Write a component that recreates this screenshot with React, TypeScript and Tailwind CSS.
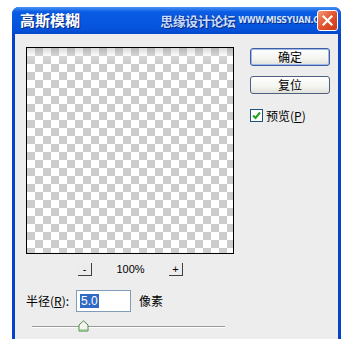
import React from "react";

const cjk = { fontFamily: '"Noto Sans CJK SC", "Noto Sans", sans-serif' };

function XpButton({ label, primary }: { label: string; primary?: boolean }) {
  return (
    <button
      type="button"
      className={`flex h-[18px] w-[80px] items-center justify-center rounded-[3px] border bg-[linear-gradient(#ffffff,#f4f4f0_60%,#e2e2dc)] text-[12px] leading-none text-black ${
        primary ? "border-[#3f5e9e] shadow-[inset_0_0_0_1px_#9db8ec]" : "border-[#4f5f7f]"
      }`}
      style={cjk}
    >
      {label}
    </button>
  );
}

function ZoomButton({ sign }: { sign: string }) {
  return (
    <button
      type="button"
      className="flex h-[13px] w-[14px] items-center justify-center border-r border-b border-[#404040] bg-[#ececec] text-[11px] leading-none text-black"
      style={{ fontFamily: '"Liberation Sans", sans-serif' }}
    >
      {sign}
    </button>
  );
}

export default function App() {
  return (
    <div className="h-[339px] w-[342px] overflow-hidden bg-white pl-[12px] pt-[7px]">
      <div className="flex h-[332px] w-[329px] flex-col overflow-hidden rounded-t-[7px] bg-[#0842c8]">
        {/* title bar */}
        <div className="flex h-[27px] shrink-0 items-center bg-[linear-gradient(#4a93f7,#0a5ce4_18%,#0553dc_80%,#0548cc)] pl-[8px] pr-[3px]">
          <span
            className="text-[15px] font-bold text-white [text-shadow:1px_1px_0_#0a2a80]"
            style={cjk}
          >
            高斯模糊
          </span>
          <div className="ml-auto flex items-center gap-[3px]">
            <span
              className="text-[13px] font-bold tracking-[-0.5px] text-[#c4dcff] [text-shadow:0_0_1px_#0a2a80,1px_1px_0_#0a2a80]"
              style={cjk}
            >
              思缘设计论坛
            </span>
            <span
              className="text-[8px] font-bold tracking-[-0.3px] text-[#d0e2ff] [text-shadow:1px_1px_0_#0a2a80]"
              style={{ fontFamily: '"DejaVu Sans", sans-serif' }}
            >
              WWW.MISSYUAN.COM
            </span>
          </div>
          <div className="relative z-10 -ml-[16px] flex h-[21px] w-[21px] shrink-0 items-center justify-center rounded-[3px] border border-white bg-[linear-gradient(135deg,#f29a7a,#e2542e_50%,#c8381a)]">
            <svg width="11" height="11" viewBox="0 0 11 11">
              <path d="M1.5 1.5 L9.5 9.5 M9.5 1.5 L1.5 9.5" stroke="white" strokeWidth="2.2" strokeLinecap="square" />
            </svg>
          </div>
        </div>

        {/* body */}
        <div className="mx-[3px] flex flex-1 gap-[16px] bg-[#ededed] pl-[11px] pt-[13px]">
          <div className="flex w-[208px] flex-col">
            <div className="relative h-[207px] w-[208px] border border-black bg-[conic-gradient(#cccccc_25%,#ffffff_0_50%,#cccccc_0_75%,#ffffff_0)] [background-size:16px_16px]">
              <div className="h-[14px] w-full bg-[linear-gradient(rgba(150,150,150,0.35),rgba(255,255,255,0.2)_60%,rgba(255,255,255,0))]" />
            </div>

            <div className="mt-[9px] flex items-center pl-[52px]">
              <ZoomButton sign="-" />
              <span
                className="w-[77px] text-center text-[11px] leading-none text-black"
                style={{ fontFamily: '"Liberation Sans", sans-serif' }}
              >
                100%
              </span>
              <ZoomButton sign="+" />
            </div>

            <div className="mt-[14px] flex items-center">
              <span className="w-[50px] text-[12px] leading-none text-black" style={cjk}>
                半径(<span className="underline">R</span>):
              </span>
              <div className="flex h-[22px] w-[55px] items-center border border-[#7f9db9] bg-white pl-[3px]">
                <span
                  className="bg-[#316ac5] px-px text-[12px] leading-[14px] text-white"
                  style={{ fontFamily: '"Liberation Sans", sans-serif' }}
                >
                  5.0
                </span>
              </div>
              <span className="ml-[8px] text-[12px] leading-none text-black" style={cjk}>
                像素
              </span>
            </div>

            <div className="relative mt-[8px] ml-[6px] h-[12px] w-[193px]">
              <div className="absolute top-[6px] left-0 h-[2px] w-full border-t border-b border-t-[#9a9a9a] border-b-white" />
              <svg className="absolute top-0 left-[46px]" width="11" height="12" viewBox="0 0 11 12">
                <path d="M1 5 L5.5 0.8 L10 5 L10 11 L1 11 Z" fill="#f4f4f0" stroke="#4f8a4a" strokeWidth="1" />
                <path d="M2 10 L9 10" stroke="#7cc070" strokeWidth="1" />
              </svg>
            </div>
          </div>

          <div className="flex flex-col pt-px">
            <XpButton label="确定" primary />
            <div className="mt-[10px]">
              <XpButton label="复位" />
            </div>
            <label className="mt-[15px] flex items-center gap-[3px]">
              <span className="flex h-[13px] w-[13px] items-center justify-center border border-[#1c5180] bg-white">
                <svg width="9" height="9" viewBox="0 0 9 9">
                  <path d="M1 4.5 L3.5 7 L8 1.5" fill="none" stroke="#21a121" strokeWidth="2" />
                </svg>
              </span>
              <span className="text-[12px] leading-none text-black" style={cjk}>
                预览(<span className="underline">P</span>)
              </span>
            </label>
          </div>
        </div>
      </div>
    </div>
  );
}
